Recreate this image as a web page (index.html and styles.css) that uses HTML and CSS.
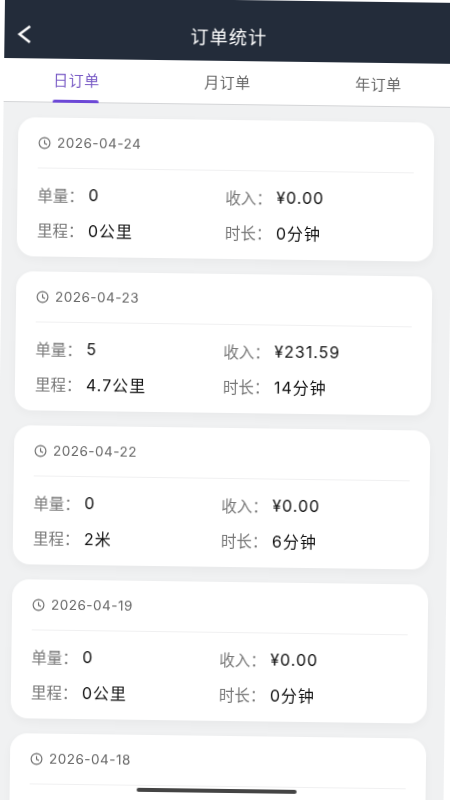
FILE: index.html
```html
<!DOCTYPE html>
<html lang="zh-CN">
  <head>
    <meta charset="UTF-8" />
    <meta name="viewport" content="width=device-width, initial-scale=1.0" />
    <title>订单统计</title>
    <link rel="stylesheet" href="styles.css">
  </head>
  <body>
    <div class="screen">
      <header class="topbar">
        <svg class="back" width="16" height="20" viewBox="0 0 16 20" fill="none" stroke="#fff" stroke-width="2.4">
          <path d="M13.5 2 L3 10 L13.5 18" />
        </svg>
        <h1>订单统计</h1>
      </header>

      <nav class="tabs">
        <a class="tab active" href="#">日订单</a>
        <a class="tab" href="#">月订单</a>
        <a class="tab" href="#">年订单</a>
      </nav>

      <main class="order-list">
        <section class="card">
          <div class="card_date">
            <svg class="clock" width="13" height="13" viewBox="0 0 13 13" fill="none" stroke="#666" stroke-width="1.1">
              <circle cx="6.5" cy="6.5" r="5.4" />
              <path d="M6.5 3.4 V6.8 L9 8" />
            </svg>
            <span>2026-04-24</span>
          </div>
          <div class="stats">
            <div class="stat"><span class="label">单量：</span><span class="value">0</span></div>
            <div class="stat"><span class="label">收入：</span><span class="value">¥0.00</span></div>
            <div class="stat"><span class="label">里程：</span><span class="value">0公里</span></div>
            <div class="stat"><span class="label">时长：</span><span class="value">0分钟</span></div>
          </div>
        </section>

        <section class="card">
          <div class="card_date">
            <svg class="clock" width="13" height="13" viewBox="0 0 13 13" fill="none" stroke="#666" stroke-width="1.1">
              <circle cx="6.5" cy="6.5" r="5.4" />
              <path d="M6.5 3.4 V6.8 L9 8" />
            </svg>
            <span>2026-04-23</span>
          </div>
          <div class="stats">
            <div class="stat"><span class="label">单量：</span><span class="value">5</span></div>
            <div class="stat"><span class="label">收入：</span><span class="value">¥231.59</span></div>
            <div class="stat"><span class="label">里程：</span><span class="value">4.7公里</span></div>
            <div class="stat"><span class="label">时长：</span><span class="value">14分钟</span></div>
          </div>
        </section>

        <section class="card">
          <div class="card_date">
            <svg class="clock" width="13" height="13" viewBox="0 0 13 13" fill="none" stroke="#666" stroke-width="1.1">
              <circle cx="6.5" cy="6.5" r="5.4" />
              <path d="M6.5 3.4 V6.8 L9 8" />
            </svg>
            <span>2026-04-22</span>
          </div>
          <div class="stats">
            <div class="stat"><span class="label">单量：</span><span class="value">0</span></div>
            <div class="stat"><span class="label">收入：</span><span class="value">¥0.00</span></div>
            <div class="stat"><span class="label">里程：</span><span class="value">2米</span></div>
            <div class="stat"><span class="label">时长：</span><span class="value">6分钟</span></div>
          </div>
        </section>

        <section class="card">
          <div class="card_date">
            <svg class="clock" width="13" height="13" viewBox="0 0 13 13" fill="none" stroke="#666" stroke-width="1.1">
              <circle cx="6.5" cy="6.5" r="5.4" />
              <path d="M6.5 3.4 V6.8 L9 8" />
            </svg>
            <span>2026-04-19</span>
          </div>
          <div class="stats">
            <div class="stat"><span class="label">单量：</span><span class="value">0</span></div>
            <div class="stat"><span class="label">收入：</span><span class="value">¥0.00</span></div>
            <div class="stat"><span class="label">里程：</span><span class="value">0公里</span></div>
            <div class="stat"><span class="label">时长：</span><span class="value">0分钟</span></div>
          </div>
        </section>

        <section class="card">
          <div class="card_date">
            <svg class="clock" width="13" height="13" viewBox="0 0 13 13" fill="none" stroke="#666" stroke-width="1.1">
              <circle cx="6.5" cy="6.5" r="5.4" />
              <path d="M6.5 3.4 V6.8 L9 8" />
            </svg>
            <span>2026-04-18</span>
          </div>
        </section>
      </main>

      <div class="home-bar"></div>
    </div>
  </body>
</html>
```

FILE: styles.css
```css
* {
  box-sizing: border-box;
}

html,
body {
  height: 100%;
  overflow: hidden;
}

body {
  margin: 0;
  background: #fff;
  font-family: Inter, "Noto Sans CJK SC", sans-serif;
}

/* the whole capture sits a little crooked */
.screen {
  position: relative;
  width: 449px;
  height: 806px;
  overflow: hidden;
  background: #f0f1f2;
  transform-origin: 0 0;
  transform: translate(5px, -3px) rotate(0.75deg);
  filter: blur(0.5px);
}

.topbar {
  display: flex;
  align-items: center;
  justify-content: center;
  position: relative;
  height: 61px;
  padding-top: 10px;
  background: #232c3a;
}

.topbar h1 {
  margin: 0;
  font-size: 18px;
  font-weight: 400;
  letter-spacing: 1.2px;
  color: #fff;
}

.back {
  position: absolute;
  left: 12px;
  top: 27px;
}

.tabs {
  display: flex;
  height: 44px;
  margin-left: -3px;
  background: #fff;
  border-bottom: 1px solid #d4d5d7;
}

.tab {
  flex: none;
  width: 151px;
  display: flex;
  justify-content: center;
  padding-top: 10px;
  position: relative;
  font-size: 15px;
  letter-spacing: 0.5px;
  color: #666;
  text-decoration: none;
}

.tab.active {
  color: #7a5cc6;
}

.tab.active::after {
  content: "";
  position: absolute;
  left: 50%;
  bottom: -1px;
  width: 46px;
  height: 3px;
  margin-left: -24px;
  border-radius: 2px 2px 0 0;
  background: #6c48d6;
}

.order-list {
  display: flex;
  flex-direction: column;
  gap: 15px;
  padding: 15px 18px 0 15px;
}

.card {
  flex-shrink: 0;
  height: 139px;
  padding: 0 20px;
  border-radius: 17px;
  background: #fff;
  box-shadow: 0 3px 10px rgba(0, 0, 0, 0.035);
}

.card_date {
  display: flex;
  align-items: center;
  gap: 6px;
  height: 51px;
  border-bottom: 1px solid #f0f0f1;
  font-size: 13.5px;
  letter-spacing: 0.5px;
  color: #666;
}

.stats {
  display: grid;
  grid-template-columns: 1fr 1fr;
  row-gap: 13px;
  padding-top: 15px;
}

.stat {
  display: flex;
  align-items: center;
  height: 22px;
  font-size: 15.5px;
}

.label {
  width: 51px;
  color: #777;
}

.value {
  font-size: 16px;
  letter-spacing: 1px;
  color: #111;
}

.home-bar {
  position: absolute;
  left: 142px;
  bottom: 13px;
  width: 160px;
  height: 4px;
  border-radius: 2px;
  background: #444;
}
```
